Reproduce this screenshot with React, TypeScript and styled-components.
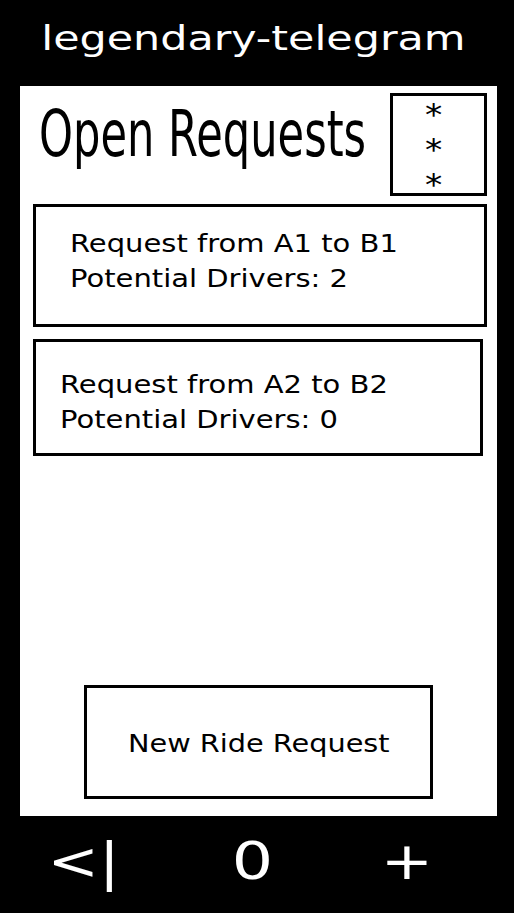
import React from "react";
import styled, { createGlobalStyle } from "styled-components";

const GlobalStyle = createGlobalStyle`
  *, *::before, *::after { box-sizing: border-box; }
  html, body { margin: 0; padding: 0; background: #000; }
  body { font-family: "DejaVu Sans", Verdana, sans-serif; color: #000; }
`;

const Screen = styled.div`
  width: 514px;
  height: 913px;
  background: #000;
  display: flex;
  flex-direction: column;
  overflow: hidden;
`;

const TopBar = styled.header`
  height: 86px;
  padding: 21px 8px 0 0;
  text-align: center;
  color: #fff;
  font-size: 34px;
  line-height: 34px;
`;

const Stretch = styled.span<{ $x: number; $origin?: string }>`
  display: inline-block;
  transform: scaleX(${(p) => p.$x});
  transform-origin: ${(p) => p.$origin ?? "center"};
  white-space: nowrap;
`;

const Panel = styled.main`
  height: 730px;
  margin: 0 17px 0 20px;
  background: #fff;
  display: flex;
  flex-direction: column;
  padding: 7px 10px 17px 13px;
`;

const HeadRow = styled.div`
  display: flex;
  justify-content: space-between;
  align-items: flex-start;
  height: 103px;
  margin-bottom: 8px;
`;

const Heading = styled.h1`
  margin: 9px 0 0 6px;
  font-weight: normal;
  font-size: 64px;
  line-height: 64px;
  width: 330px;
`;

const MenuBox = styled.div`
  width: 97px;
  height: 103px;
  border: 3px solid #000;
  display: flex;
  flex-direction: column;
  align-items: center;
  padding: 1px 11px 0 0;
  font-size: 30px;
  line-height: 35px;
`;

const Card = styled.div<{ $h: number; $mr: number; $pl: number; $pt: number }>`
  height: ${(p) => p.$h}px;
  margin-right: ${(p) => p.$mr}px;
  border: 3px solid #000;
  padding: ${(p) => p.$pt}px 0 0 ${(p) => p.$pl}px;
  font-size: 25px;
  line-height: 35px;
  display: flex;
  flex-direction: column;
  align-items: flex-start;
`;

const CardList = styled.section`
  display: flex;
  flex-direction: column;
  gap: 12px;
`;

const NewButton = styled.button`
  margin-top: auto;
  align-self: center;
  width: 349px;
  height: 114px;
  margin-left: -3px;
  border: 3px solid #000;
  background: #fff;
  padding: 3px 0 0 0;
  font-family: inherit;
  font-size: 25px;
  line-height: 35px;
  color: #000;
  display: flex;
  align-items: center;
  justify-content: center;
`;

const Nav = styled.nav`
  height: 97px;
  padding-top: 19px;
  display: grid;
  grid-template-columns: 168px 170px 137px;
  justify-items: center;
  color: #fff;
  font-size: 52px;
  line-height: 52px;
`;

const requests = [
  { from: "A1", to: "B1", drivers: 2, h: 123, mr: 0, pl: 34, pt: 19 },
  { from: "A2", to: "B2", drivers: 0, h: 117, mr: 4, pl: 24, pt: 25 },
];

export default function App() {
  return (
    <>
      <GlobalStyle />
      <Screen>
        <TopBar>
          <Stretch $x={1.26}>legendary-telegram</Stretch>
        </TopBar>
        <Panel>
          <HeadRow>
            <Heading>
              <Stretch $x={0.675} $origin="left">Open Requests</Stretch>
            </Heading>
            <MenuBox>
              <Stretch $x={1.15}>*</Stretch>
              <Stretch $x={1.15}>*</Stretch>
              <Stretch $x={1.15}>*</Stretch>
            </MenuBox>
          </HeadRow>
          <CardList>
            {requests.map((r) => (
              <Card key={r.from} $h={r.h} $mr={r.mr} $pl={r.pl} $pt={r.pt}>
                <Stretch $x={1.16} $origin="left">
                  Request from {r.from} to {r.to}
                </Stretch>
                <Stretch $x={1.16} $origin="left">
                  Potential Drivers: {r.drivers}
                </Stretch>
              </Card>
            ))}
          </CardList>
          <NewButton>
            <Stretch $x={1.15}>New Ride Request</Stretch>
          </NewButton>
        </Panel>
        <Nav>
          <Stretch $x={1.18}>&lt;|</Stretch>
          <Stretch $x={1.25}>0</Stretch>
          <Stretch $x={1.2}>+</Stretch>
        </Nav>
      </Screen>
    </>
  );
}
